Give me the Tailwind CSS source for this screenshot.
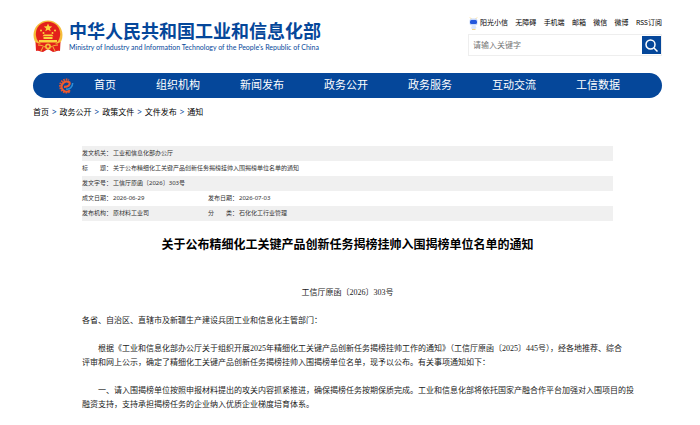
<!DOCTYPE html>
<html lang="zh-CN">
<head>
    <meta charset="UTF-8">
    <meta name="viewport" content="width=device-width, initial-scale=1.0">
    <title>关于公布精细化工关键产品创新任务揭榜挂帅入围揭榜单位名单的通知</title>
    <script src="https://cdn.jsdelivr.net/npm/@tailwindcss/browser@4"></script>
</head>
<body class="bg-white pl-[33px] pr-[38px] font-['Noto_Sans','Noto_Sans_CJK_SC',sans-serif] text-black overflow-x-hidden">
    <!-- Header -->
    <header class="flex justify-between pt-4">
        <a href="#" class="flex items-start gap-1.5 pt-1 text-[#05479a]">
            <svg class="w-[30px] h-[33px]" viewBox="0 0 30 33" aria-hidden="true">
                <circle cx="15" cy="15" r="14.5" fill="#f5bd3a"/>
                <circle cx="15" cy="14" r="12.2" fill="#e3211c"/>
                <path d="M15 3.500l1.200 2.800 3 .2-2.300 1.900.8 2.900-2.700-1.600-2.700 1.600.8-2.900-2.300-1.900 3-.2z" fill="#fbd53e"/>
                <g fill="#fbd53e">
                    <circle cx="8" cy="10.500" r="1"/><circle cx="10.500" cy="13" r="1"/>
                    <circle cx="19.500" cy="13" r="1"/><circle cx="22" cy="10.500" r="1"/>
                    <path d="M11 14.500h8l1.500 1.800h-11zM10.500 17h9v2h-9zM6 20h18v2.500H6z"/>
                </g>
                <path d="M2.500 22c5 3.500 20 3.500 25 0l-.5 9c-3-1-5 1-7 1l-5-3-5 3c-2 0-4-2-7-1z" fill="#e3211c"/>
                <circle cx="15" cy="26.500" r="3" fill="#f5bd3a"/>
                <circle cx="15" cy="26.500" r="1.200" fill="#e3211c"/>
                <path d="M5 25c3 0 5 1 7 2M25 25c-3 0-5 1-7 2M8 31l2-4M22 31l-2-4" stroke="#f5bd3a" stroke-width="1" fill="none"/>
            </svg>
            <span class="flex flex-col whitespace-nowrap">
                <span class="text-[18px] leading-[23px] font-bold">中华人民共和国工业和信息化部</span>
                <span class="font-[Lato,sans-serif] text-[7px] leading-[9px]">Ministry of Industry and Information Technology of the People's Republic of China</span>
            </span>
        </a>
        <div class="w-[194px]">
            <ul class="flex items-center justify-between h-[14px] pl-px text-[7px] whitespace-nowrap">
                <li><a href="#" class="flex items-center gap-0.5">
                    <svg class="w-[9px] h-[13px]" viewBox="0 0 9 13" aria-hidden="true">
                        <path d="M1 .5l2 2M8 .5l-2 2" stroke="#f7d685" stroke-width="1"/>
                        <rect x=".5" y="1.500" width="8" height="7" rx="2.500" fill="#c9dafa"/>
                        <rect x="1" y="3" width="7" height="4" rx="1.500" fill="#2458dc"/>
                        <path d="M3 8.500h3.500l1 2.500-1.500 1H3l-1-1z" fill="#dbe6fa"/>
                        <path d="M3 12.500h3.500" stroke="#f7d685" stroke-width="1"/>
                    </svg>阳光小信</a></li>
                <li><a href="#">无障碍</a></li>
                <li><a href="#">手机端</a></li>
                <li><a href="#">邮箱</a></li>
                <li><a href="#">微信</a></li>
                <li><a href="#">微博</a></li>
                <li><a href="#">RSS订阅</a></li>
            </ul>
            <form class="flex mt-1 h-[22px] border border-[#eee]">
                <input type="text" aria-label="搜索" placeholder="请输入关键字" class="flex-1 min-w-0 pl-1 text-[8px] placeholder:text-[#757575] outline-none">
                <button type="button" aria-label="搜索" class="flex items-center justify-center w-[19px] my-px bg-[#05479a]">
                    <svg class="w-[13px] h-[13px]" viewBox="0 0 13 13" fill="none" stroke="#fff" stroke-width="1.5" aria-hidden="true">
                        <circle cx="5.5" cy="5.5" r="4.5"/><path d="M9 9l3.500 3.500"/>
                    </svg>
                </button>
            </form>
        </div>
    </header>

    <!-- Main navigation -->
    <nav class="flex items-center gap-10 mt-[17px] h-[25px] pl-[25px] rounded-full bg-[#05479a] text-white text-[11px] whitespace-nowrap">
        <a href="#" aria-label="标志" class="-mr-5">
            <svg class="w-4 h-4" viewBox="0 0 16 16" fill="none" aria-hidden="true">
                <path d="M11.500 13.800A6.500 6.500 0 1 1 11 2" stroke="#e8532c" stroke-width="2" stroke-dasharray="1.500 1"/>
                <path d="M12 12.300A5 5 0 1 1 11.500 4.500C12.500 6.500 10.500 9 6 8.800" stroke="#f05a2d" stroke-width="2.200"/>
                <path d="M8 11c4 .8 6.500-2 6.700-6" stroke="#2c8fd8" stroke-width="1.500"/>
            </svg>
        </a>
        <a href="#">首页</a>
        <a href="#">组织机构</a>
        <a href="#">新闻发布</a>
        <a href="#">政务公开</a>
        <a href="#">政务服务</a>
        <a href="#">互动交流</a>
        <a href="#">工信数据</a>
    </nav>

    <!-- Breadcrumb -->
    <div class="flex items-center gap-[3px] mt-1.5 h-4 text-[8px] whitespace-nowrap">
        <a href="#">首页</a><span class="text-[#05479a]">&gt;</span>
        <a href="#">政务公开</a><span class="text-[#05479a]">&gt;</span>
        <a href="#">政策文件</a><span class="text-[#05479a]">&gt;</span>
        <a href="#">文件发布</a><span class="text-[#05479a]">&gt;</span>
        <a href="#">通知</a>
    </div>

    <main class="mx-[49px] mt-[26px]">
        <!-- Document info -->
        <table class="w-full table-fixed text-[6px] leading-[15px] text-[#333] text-left whitespace-nowrap">
            <colgroup><col class="w-[31px]"><col class="w-[95px]"><col class="w-[31px]"><col></colgroup>
            <tr class="bg-[#f0f0f0]"><th class="font-normal">发文机关：</th><td colspan="3">工业和信息化部办公厅</td></tr>
            <tr><th class="font-normal">标　　题：</th><td colspan="3">关于公布精细化工关键产品创新任务揭榜挂帅入围揭榜单位名单的通知</td></tr>
            <tr class="bg-[#f0f0f0]"><th class="font-normal">发文字号：</th><td colspan="3">工信厅原函〔2026〕303号</td></tr>
            <tr><th class="font-normal">成文日期：</th><td>2026-06-29</td><th class="font-normal">发布日期：</th><td>2026-07-03</td></tr>
            <tr class="bg-[#f0f0f0]"><th class="font-normal">发布机构：</th><td>原材料工业司</td><th class="font-normal">分　　类：</th><td>石化化工行业管理</td></tr>
        </table>

        <!-- Article -->
        <h1 class="mt-3.5 text-[12px] leading-5 font-bold text-center whitespace-nowrap">关于公布精细化工关键产品创新任务揭榜挂帅入围揭榜单位名单的通知</h1>
        <div class="mt-[31px] font-['Liberation_Serif','Noto_Sans_CJK_SC',serif] text-[8px] leading-[14px] text-[#222] whitespace-nowrap">
            <p class="text-center">工信厅原函〔2026〕303号</p>
            <p class="mt-3.5">各省、自治区、直辖市及新疆生产建设兵团工业和信息化主管部门：</p>
            <p class="mt-3.5 indent-4">根据《工业和信息化部办公厅关于组织开展2025年精细化工关键产品创新任务揭榜挂帅工作的通知》（工信厅原函〔2025〕445号），经各地推荐、综合<br>评审和网上公示，确定了精细化工关键产品创新任务揭榜挂帅入围揭榜单位名单，现予以公布。有关事项通知如下：</p>
            <p class="mt-3.5 indent-4">一、请入围揭榜单位按照申报材料提出的攻关内容抓紧推进，确保揭榜任务按期保质完成。工业和信息化部将依托国家产融合作平台加强对入围项目的投<br>融资支持，支持承担揭榜任务的企业纳入优质企业梯度培育体系。</p>
        </div>
    </main>
</body>
</html>
